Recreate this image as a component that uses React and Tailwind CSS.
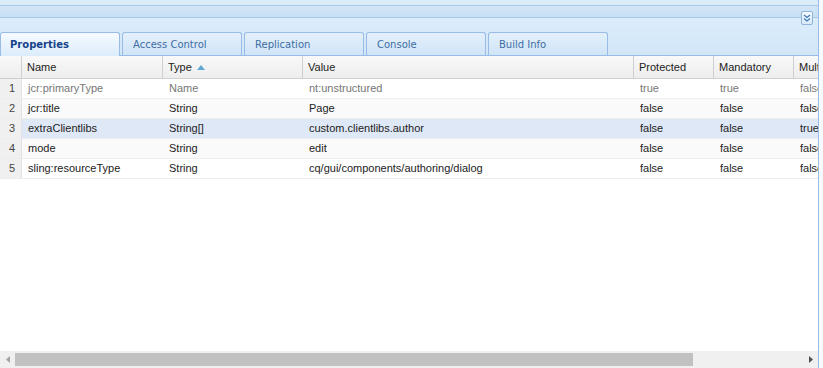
import React from 'react';

const columns = [
  { key: 'name', label: 'Name', w: 'w-[141px]' },
  { key: 'type', label: 'Type', w: 'w-[140px]', sorted: true },
  { key: 'value', label: 'Value', w: 'w-[331px]' },
  { key: 'prot', label: 'Protected', w: 'w-[80px]' },
  { key: 'mand', label: 'Mandatory', w: 'w-[80px]' },
  { key: 'multi', label: 'Multiple', w: 'w-[80px]' },
];

const rows = [
  { name: 'jcr:primaryType', type: 'Name', value: 'nt:unstructured', prot: 'true', mand: 'true', multi: 'false', muted: true },
  { name: 'jcr:title', type: 'String', value: 'Page', prot: 'false', mand: 'false', multi: 'false' },
  { name: 'extraClientlibs', type: 'String[]', value: 'custom.clientlibs.author', prot: 'false', mand: 'false', multi: 'true', selected: true },
  { name: 'mode', type: 'String', value: 'edit', prot: 'false', mand: 'false', multi: 'false' },
  { name: 'sling:resourceType', type: 'String', value: 'cq/gui/components/authoring/dialog', prot: 'false', mand: 'false', multi: 'false' },
];

const tabs = ['Properties', 'Access Control', 'Replication', 'Console', 'Build Info'];

export default function App() {
  return (
    <div className="w-[823px] h-[368px] overflow-hidden bg-white flex" style={{ fontFamily: '"Liberation Sans", Arial, sans-serif' }}>
      <div className="w-[819px] h-full flex flex-col border-r border-[#99bbe8] overflow-hidden">
        {/* top bar */}
        <div className="h-[6px] bg-[#dcebf8] border-b border-[#a9cbe8] shrink-0" />
        <div className="h-[12px] bg-gradient-to-b from-[#d3e6f7] to-[#c7def4] border-b border-[#a9cbe8] shrink-0 flex justify-end items-start pr-[5px]">
          <div className="mt-[5px] w-[12px] h-[14px] rounded-[2px] border border-[#8fb3d9] bg-gradient-to-b from-[#f4f9fe] to-[#d9eaf9] flex items-center justify-center relative z-10">
            <svg width="8" height="8" viewBox="0 0 8 8" fill="none" stroke="#3d78b4" strokeWidth="1.2">
              <path d="M1 1 L4 3.5 L7 1" />
              <path d="M1 4.5 L4 7 L7 4.5" />
            </svg>
          </div>
        </div>

        {/* tab strip */}
        <div className="h-[38px] shrink-0 bg-gradient-to-b from-[#dbedfb] to-[#d2e6f8] border-b border-[#99bbe8] flex items-end gap-[2px]">
          {tabs.map((t, i) => (
            <div
              key={t}
              className={
                i === 0
                  ? 'w-[120px] h-[24px] -mb-px rounded-t-[3px] border border-b-0 border-[#99bbe8] bg-gradient-to-b from-[#f5faff] to-[#dcecfb] flex items-center pl-[9px] text-[10px] font-bold text-[#15428b]'
                  : 'w-[120px] h-[23px] rounded-t-[3px] border border-b-0 border-[#99bbe8] bg-gradient-to-b from-[#e4f0fb] to-[#cfe4f7] flex items-center pl-[10px] text-[10px] text-[#416da3]'
              }
              style={{ fontFamily: '"DejaVu Sans", Verdana, sans-serif' }}
            >
              {t}
            </div>
          ))}
        </div>

        {/* grid */}
        <div className="flex-1 flex flex-col bg-white">
          <div className="h-[23px] shrink-0 flex bg-gradient-to-b from-[#f9f9f9] to-[#eeeeee] border-b border-[#d0d0d0] text-[11px] text-[#222]">
            <div className="w-[22px] shrink-0 border-r border-[#d0d0d0]" />
            {columns.map((c) => (
              <div key={c.key} className={`${c.w} shrink-0 border-r border-[#d0d0d0] flex items-center pl-[5px] whitespace-nowrap overflow-hidden`}>
                {c.label}
                {c.sorted && (
                  <svg width="8" height="5" viewBox="0 0 8 5" className="ml-[5px]">
                    <path d="M0 5 L4 0 L8 5 Z" fill="#61a8d2" />
                  </svg>
                )}
              </div>
            ))}
          </div>
          {rows.map((r, i) => (
            <div
              key={r.name}
              className={`h-[20px] shrink-0 flex border-b border-[#ededed] text-[11px] ${
                r.selected ? 'bg-[#dfe8f6]' : i % 2 === 1 ? 'bg-[#fafafa]' : 'bg-white'
              } ${r.muted ? 'text-[#777]' : 'text-[#222]'}`}
            >
              <div className="w-[22px] shrink-0 bg-[#f0f0f0] border-r border-[#e2e2e2] flex items-center justify-end pr-[6px] text-[#444]">
                {i + 1}
              </div>
              {columns.map((c) => (
                <div key={c.key} className={`${c.w} shrink-0 flex items-center pl-[6px] whitespace-nowrap overflow-hidden`}>
                  {r[c.key]}
                </div>
              ))}
            </div>
          ))}
          <div className="flex-1" />
          {/* horizontal scrollbar */}
          <div className="h-[17px] shrink-0 bg-[#f0f0f0] flex items-center">
            <div className="w-[15px] h-full flex items-center justify-center">
              <svg width="4" height="7" viewBox="0 0 4 7"><path d="M4 0 L0 3.5 L4 7 Z" fill="#a3a3a3" /></svg>
            </div>
            <div className="w-[678px] h-[13px] bg-[#c1c1c1]" />
            <div className="flex-1" />
            <div className="w-[15px] h-full flex items-center justify-center">
              <svg width="4" height="7" viewBox="0 0 4 7"><path d="M0 0 L4 3.5 L0 7 Z" fill="#505050" /></svg>
            </div>
          </div>
        </div>
      </div>
      <div className="flex-1 bg-[#f6fafd]" />
    </div>
  );
}
